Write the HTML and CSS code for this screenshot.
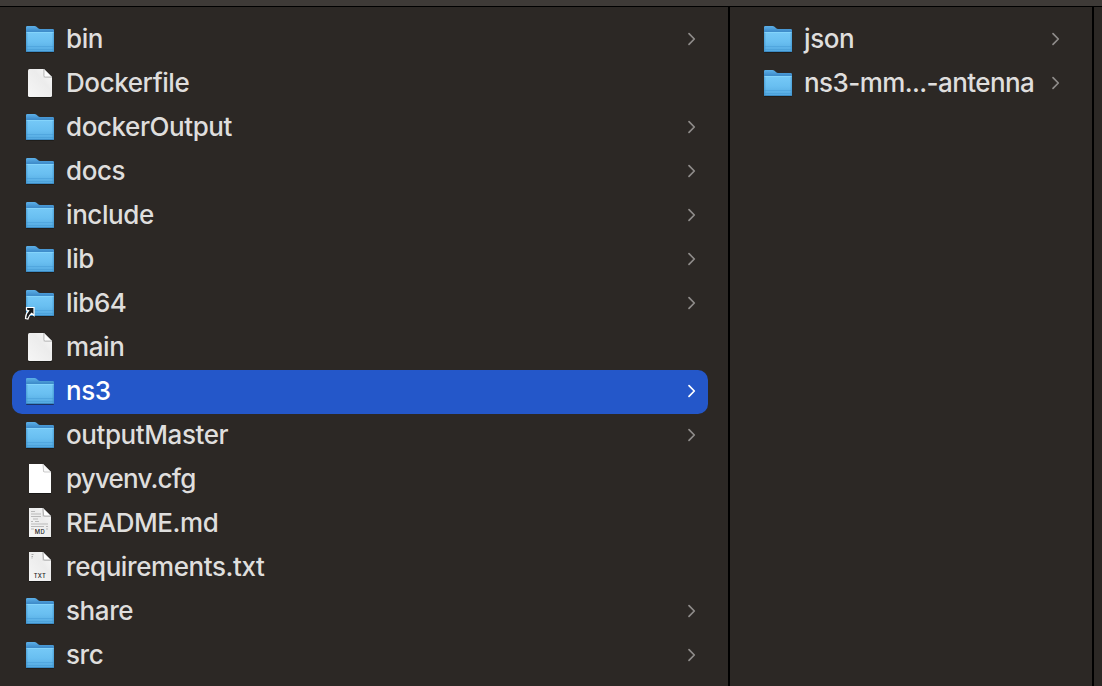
FILE: index.html
```html
<!DOCTYPE html>
<html lang="en">
<head>
<meta charset="utf-8">
<title>Files</title>
<link rel="stylesheet" href="styles.css">
</head>
<body>
<svg class="defs" aria-hidden="true">
  <defs>
    <linearGradient id="back" x1="0" y1="0" x2="0" y2="1"><stop offset="0" stop-color="#5cb0e8"/><stop offset=".2" stop-color="#3f8dcb"/><stop offset="1" stop-color="#3f8dcb"/></linearGradient>
    <linearGradient id="front" x1="0" y1="0" x2="0" y2="1"><stop offset="0" stop-color="#76c9f7"/><stop offset=".5" stop-color="#69bff1"/><stop offset="1" stop-color="#53a8e0"/></linearGradient>
    <linearGradient id="paper" x1="1" y1="0" x2="0" y2="1"><stop offset="0" stop-color="#fafafa"/><stop offset=".4" stop-color="#ececec"/><stop offset="1" stop-color="#f6f6f6"/></linearGradient>
    <linearGradient id="edge" x1="0" y1="0" x2="1" y2="0"><stop offset="0" stop-color="#2f82bf" stop-opacity=".5"/><stop offset=".08" stop-color="#2f82bf" stop-opacity="0"/><stop offset=".92" stop-color="#2f82bf" stop-opacity="0"/><stop offset="1" stop-color="#2f82bf" stop-opacity=".5"/></linearGradient>
  </defs>
  <symbol id="folder" viewBox="0 0 32 44">
    <path d="M2 33h28v1.200q0 .8-1 .8H3q-1 0-1-.8z" fill="#151413" opacity=".55"/>
    <path d="M2 9.300q0-1.300 1.300-1.300h7.200q1.200 0 2 .7l1.700 1.600q.7.700 1.800.7h12.700q1.300 0 1.300 1.300v20.200q0 1.500-1.500 1.500h-25q-1.500 0-1.500-1.500z" fill="url(#back)"/>
    <path d="M2 14h28v18.700q0 1.300-1.300 1.300H3.300q-1.300 0-1.300-1.300z" fill="url(#front)"/>
    <path d="M2 14h28v18.700q0 1.300-1.300 1.300H3.300q-1.300 0-1.300-1.300z" fill="url(#edge)"/>
    <path d="M2.500 14.500h27" stroke="#8edcff" opacity=".6"/>
    <path d="M2.500 28.500h27M2.500 31.500h27" stroke="#3d93cf" opacity=".38"/>
    <path d="M2.500 33.500h27" stroke="#337fb8" opacity=".7"/>
  </symbol>
  <symbol id="page" viewBox="0 0 32 44">
    <path d="M4 34h24v1.200q0 .5-1 .5H5q-1 0-1-.5z" fill="#121110" opacity=".7"/>
    <path d="M5.500 7H20l8 8v18.500q0 1.500-1.500 1.500h-21q-1.500 0-1.500-1.500v-25Q4 7 5.500 7z" fill="url(#paper)"/>
    <path d="M19.600 7v8.400H28" fill="#c9c9c9"/>
    <path d="M20 7l8 8h-6.700q-1.300 0-1.300-1.300z" fill="#fcfcfc" stroke="#a8a8a8" stroke-width=".7"/>
  </symbol>
  <symbol id="blank" viewBox="0 0 32 44">
    <path d="M5 35h22v1H5z" fill="#111" opacity=".7"/>
    <path d="M5 6h14l8 8v21H5z" fill="#fff"/>
    <path d="M19 6v8h8" fill="#ddd"/>
    <path d="M19 6l8 8h-6.300q-1.200 0-1.200-1.200z" fill="#fafafa" stroke="#b4b4b4" stroke-width=".7"/>
  </symbol>
  <symbol id="sheet" viewBox="0 0 32 44">
    <path d="M5 35h22v1H5z" fill="#111" opacity=".7"/>
    <path d="M5 6h14l8 8v21H5z" fill="url(#paper)"/>
    <path d="M18.600 6v8.400H27" fill="#c0c0c0"/>
    <path d="M19 6l8 8h-6.300q-1.200 0-1.200-1.200z" fill="#fff" stroke="#999" stroke-width=".7"/>
  </symbol>
  <symbol id="chevron" viewBox="0 0 10 16"><path d="M2 2.700l5.300 5.300L2 13.300" fill="none" stroke="currentColor" stroke-width="1.700" stroke-linecap="round" stroke-linejoin="round"/></symbol>
</svg>

<div class="toolbar"></div>
<main class="browser">
  <ul class="column column-main">
    <li class="row"><svg class="icon"><use href="#folder"/></svg><span class="name">bin</span><svg class="chevron"><use href="#chevron"/></svg></li>
    <li class="row"><svg class="icon"><use href="#page"/></svg><span class="name">Dockerfile</span></li>
    <li class="row"><svg class="icon"><use href="#folder"/></svg><span class="name">dockerOutput</span><svg class="chevron"><use href="#chevron"/></svg></li>
    <li class="row"><svg class="icon"><use href="#folder"/></svg><span class="name">docs</span><svg class="chevron"><use href="#chevron"/></svg></li>
    <li class="row"><svg class="icon"><use href="#folder"/></svg><span class="name">include</span><svg class="chevron"><use href="#chevron"/></svg></li>
    <li class="row"><svg class="icon"><use href="#folder"/></svg><span class="name">lib</span><svg class="chevron"><use href="#chevron"/></svg></li>
    <li class="row"><svg class="icon" viewBox="0 0 32 44"><use href="#folder" width="32" height="44"/><path d="M2.500 25.500h7.500v8l-2.300-2.200Q4.700 33.500 3.900 37L1.500 36.500Q1.500 32 4.700 28.700L2.500 28z" fill="#16181b" stroke="#fff" stroke-width="1.200" stroke-linejoin="miter"/></svg><span class="name">lib64</span><svg class="chevron"><use href="#chevron"/></svg></li>
    <li class="row"><svg class="icon"><use href="#page"/></svg><span class="name">main</span></li>
    <li class="row selected"><svg class="icon"><use href="#folder"/></svg><span class="name">ns3</span><svg class="chevron"><use href="#chevron"/></svg></li>
    <li class="row"><svg class="icon"><use href="#folder"/></svg><span class="name">outputMaster</span><svg class="chevron"><use href="#chevron"/></svg></li>
    <li class="row"><svg class="icon"><use href="#blank"/></svg><span class="name tight">pyvenv.cfg</span></li>
    <li class="row"><svg class="icon" viewBox="0 0 32 44"><use href="#sheet" width="32" height="44"/><path d="M7 9.500h4M7 12h10M7 14.500h10M9 17h5M7 19.500h2M11 19.500h4M7 22h17M7 24.500h13M22 24.500h2M7 27h3M22 27h2" stroke="#b9b9b9" stroke-width="1"/><text class="kind" x="16" y="32">MD</text></svg><span class="name">README.md</span></li>
    <li class="row"><svg class="icon" viewBox="0 0 32 44"><use href="#sheet" width="32" height="44"/><path d="M7.500 8.500h2M7.500 10.500h1.500M7.500 12h1" stroke="#aaa"/><text class="kind" x="16" y="32">TXT</text></svg><span class="name">requirements.txt</span></li>
    <li class="row"><svg class="icon"><use href="#folder"/></svg><span class="name">share</span><svg class="chevron"><use href="#chevron"/></svg></li>
    <li class="row"><svg class="icon"><use href="#folder"/></svg><span class="name">src</span><svg class="chevron"><use href="#chevron"/></svg></li>
  </ul>
  <ul class="column column-child">
    <li class="row"><svg class="icon"><use href="#folder"/></svg><span class="name">json</span><svg class="chevron"><use href="#chevron"/></svg></li>
    <li class="row"><svg class="icon"><use href="#folder"/></svg><span class="name shortened">ns3-mm...-antenna</span><svg class="chevron"><use href="#chevron"/></svg></li>
  </ul>
  <div class="column"></div>
</main>
</body>
</html>
```
FILE: styles.css
```css
* { box-sizing: border-box; }
body {
  margin: 0;
  height: 686px;
  overflow: hidden;
  display: flex;
  flex-direction: column;
  background: #2c2825;
  color: #dfdedd;
  font-family: Inter, "Liberation Sans", sans-serif;
}
.defs { position: absolute; width: 0; height: 0; }
.toolbar {
  flex: none;
  height: 7px;
  background: #3e3a37;
  border-bottom: 1px solid #000;
}
.browser {
  flex: 1;
  min-height: 0;
  display: grid;
  grid-template-columns: 730px 364px 1fr;
}
.column {
  margin: 0;
  padding: 11px 20px 0 12px;
  list-style: none;
  border-right: 2px solid #000;
}
.column:last-child { border-right: 0; padding: 0; }
.column-child { padding-left: 20px; }
.row {
  display: flex;
  align-items: center;
  height: 44px;
  padding: 0 11px 0 12px;
  border-radius: 10px;
}
.selected { background: #2457c9; color: #fff; }
.icon { flex: none; width: 32px; height: 44px; }
.name {
  flex: 1;
  padding: 0 0 2px 10px;
  font-size: 26px;
  font-weight: 450;
  line-height: 32px;
  letter-spacing: -0.42px;
  white-space: nowrap;
}
.tight { letter-spacing: -0.8px; }
.shortened { letter-spacing: -0.58px; }
.selected .name { font-weight: 500; }
.chevron {
  flex: none;
  width: 10px;
  height: 16px;
  margin-bottom: 2px;
  color: #8f8c8a;
}
.selected .chevron { color: #fff; }
.kind {
  font: 500 5.8px Inter, sans-serif;
  letter-spacing: .4px;
  text-anchor: middle;
  fill: #222;
}
```
